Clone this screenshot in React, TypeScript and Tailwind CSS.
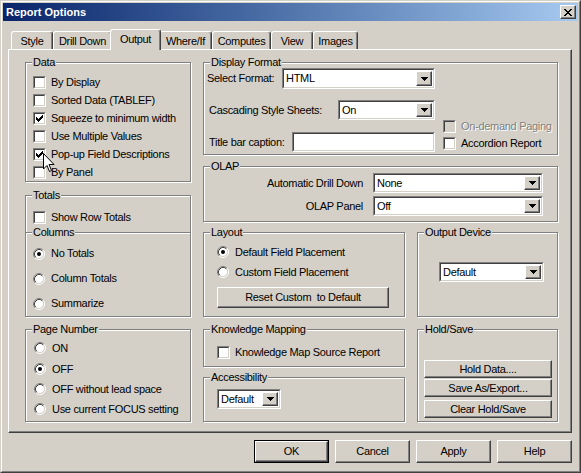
import clsx from "clsx";
import type { ReactNode } from "react";

const CHECK = ["......x", ".....xx", "x...xxx", "xx.xxx.", "xxxxx..", ".xxx...", "..x...."];
const CLOSE_X = ["xx....xx", ".xx..xx.", "..xxxx..", "...xx...", "..xxxx..", ".xx..xx.", "xx....xx"];
const ARROW = ["xxxxxxx", ".xxxxx.", "..xxx..", "...x..."];

function Pixels({ rows, color = "#000" }: { rows: string[]; color?: string }) {
	const w = rows[0].length;
	const h = rows.length;
	return (
		<svg width={w} height={h} viewBox={`0 0 ${w} ${h}`} shapeRendering="crispEdges">
			{rows.flatMap((r, y) =>
				[...r].map((c, x) => (c === "x" ? <rect key={`${x}-${y}`} x={x} y={y} width="1" height="1" fill={color} /> : null)),
			)}
		</svg>
	);
}

function Check({ checked, disabled }: { checked?: boolean; disabled?: boolean }) {
	return (
		<span className="flex h-[13px] w-[13px] shrink-0 border border-t-[#808080] border-r-white border-b-white border-l-[#808080]">
			<span
				className={clsx(
					"flex flex-1 items-center justify-center border border-t-[#404040] border-r-[#d4d0c8] border-b-[#d4d0c8] border-l-[#404040]",
					disabled ? "bg-[#d4d0c8]" : "bg-white",
				)}
			>
				{checked && <Pixels rows={CHECK} />}
			</span>
		</span>
	);
}

function Radio({ on }: { on?: boolean }) {
	return (
		<svg width="12" height="12" viewBox="0 0 12 12" className="shrink-0">
			<circle cx="6" cy="6" r="4.5" fill="#fff" />
			<path d="M2.11 9.89A5.5 5.5 0 0 1 9.89 2.11" fill="none" stroke="#808080" />
			<path d="M9.89 2.11A5.5 5.5 0 0 1 2.11 9.89" fill="none" stroke="#fff" />
			<path d="M2.82 9.18A4.5 4.5 0 0 1 9.18 2.82" fill="none" stroke="#404040" />
			<path d="M9.18 2.82A4.5 4.5 0 0 1 2.82 9.18" fill="none" stroke="#d4d0c8" />
			{on && <circle cx="6" cy="6" r="2" fill="#000" />}
		</svg>
	);
}

function CheckRow({ label, checked, disabled, className }: { label: string; checked?: boolean; disabled?: boolean; className?: string }) {
	return (
		<div className={clsx("flex items-center gap-[5px] leading-[13px]", className)}>
			<Check checked={checked} disabled={disabled} />
			<span className={clsx("whitespace-nowrap", disabled && "text-[#808080] [text-shadow:1px_1px_0_#fff]")}>{label}</span>
		</div>
	);
}

function RadioRow({ label, on, className }: { label: string; on?: boolean; className?: string }) {
	return (
		<div className={clsx("flex items-center gap-[6px] leading-[13px]", className)}>
			<Radio on={on} />
			<span className="whitespace-nowrap">{label}</span>
		</div>
	);
}

function Group({ label, className, children }: { label: string; className?: string; children?: ReactNode }) {
	return (
		<div className={clsx("relative border border-[#808080] shadow-[inset_1px_1px_0_#fff,1px_1px_0_#fff]", className)}>
			<span className="absolute top-[-7px] left-[6px] bg-[#d4d0c8] px-px leading-[13px] whitespace-nowrap">{label}</span>
			{children}
		</div>
	);
}

function Sunken({ className, children }: { className?: string; children?: ReactNode }) {
	return (
		<div className={clsx("flex border border-t-[#808080] border-r-white border-b-white border-l-[#808080]", className)}>
			<div className="flex flex-1 border border-t-[#404040] border-r-[#d4d0c8] border-b-[#d4d0c8] border-l-[#404040] bg-white">
				{children}
			</div>
		</div>
	);
}

function Select({ value, className }: { value: string; className?: string }) {
	return (
		<Sunken className={className}>
			<span className="flex-1 self-center pl-[2px] leading-[13px] whitespace-nowrap">{value}</span>
			<span className="m-px flex w-[16px] items-center justify-center border border-t-white border-r-[#404040] border-b-[#404040] border-l-white bg-[#d4d0c8] shadow-[inset_-1px_-1px_0_#808080]">
				<Pixels rows={ARROW} />
			</span>
		</Sunken>
	);
}

function Button({ label, className }: { label: string; className?: string }) {
	return (
		<div
			className={clsx(
				"flex items-center justify-center border border-t-white border-r-[#404040] border-b-[#404040] border-l-white bg-[#d4d0c8] leading-[13px] shadow-[inset_-1px_-1px_0_#808080] whitespace-nowrap",
				className,
			)}
		>
			{label}
		</div>
	);
}

const tabs = [
	{ name: "Style", w: "w-[42px]" },
	{ name: "Drill Down", w: "w-[59px]" },
	{ name: "Output", w: "w-[51px]", active: true },
	{ name: "Where/If", w: "w-[53px]" },
	{ name: "Computes", w: "w-[59px]" },
	{ name: "View", w: "w-[42px]" },
	{ name: "Images", w: "w-[45px]" },
];

function Tabs() {
	return (
		<div className="mt-[8px] flex h-[20px] items-end pl-[3px]">
			{tabs.map((t) => (
				<div
					key={t.name}
					className={clsx(
						"flex justify-center rounded-t-[3px] border-t border-r border-l border-t-white border-r-[#404040] border-l-white bg-[#d4d0c8] leading-[13px] shadow-[inset_-1px_0_0_#808080] whitespace-nowrap",
						t.w,
						t.active ? "relative z-10 -mx-[2px] -mb-px h-[21px] items-start pt-[3px]" : "h-[18px] items-center pt-px",
					)}
				>
					{t.name}
				</div>
			))}
		</div>
	);
}

function Panel() {
	return (
		<div className="flex h-[384px] gap-[12px] border border-t-white border-r-[#404040] border-b-[#404040] border-l-white pt-[12px] pl-[16px] shadow-[inset_-1px_-1px_0_#808080]">
			<div className="flex w-[166px] flex-col">
				<Group label="Data" className="h-[120px] pt-[10px] pl-[7px]">
					<CheckRow label="By Display" className="h-[18px]" />
					<CheckRow label="Sorted Data (TABLEF)" className="h-[18px]" />
					<CheckRow label="Squeeze to minimum width" checked className="h-[18px]" />
					<CheckRow label="Use Multiple Values" className="h-[18px]" />
					<CheckRow label="Pop-up Field Descriptions" checked className="h-[18px]" />
					<CheckRow label="By Panel" className="h-[18px]" />
				</Group>
				<Group label="Totals" className="mt-[13px] h-[38px] pt-[12px] pl-[7px]">
					<CheckRow label="Show Row Totals" className="h-[18px]" />
				</Group>
				<Group label="Columns" className="-mt-px h-[85px] pt-[8px] pl-[7px]">
					<RadioRow label="No Totals" on className="h-[25px]" />
					<RadioRow label="Column Totals" className="h-[25px]" />
					<RadioRow label="Summarize" className="h-[25px]" />
				</Group>
				<Group label="Page Number" className="mt-[12px] h-[93px] pt-[8px] pl-[8px]">
					<RadioRow label="ON" className="h-[20px]" />
					<RadioRow label="OFF" on className="mt-px h-[20px]" />
					<RadioRow label="OFF without lead space" className="h-[20px]" />
					<RadioRow label="Use current FOCUS setting" className="h-[20px]" />
				</Group>
			</div>

			<div className="flex w-[355px] flex-col">
				<Group label="Display Format" className="flex h-[93px] pl-[3px]">
					<div className="flex w-[228px] flex-col pt-[5px]">
						<div className="flex h-[21px] items-center">
							<span className="w-[75px] leading-[13px]">Select Format:</span>
							<Select value="HTML" className="h-[21px] w-[153px]" />
						</div>
						<div className="mt-[11px] flex h-[20px] items-center">
							<span className="w-[131px] pl-[2px] leading-[13px]">Cascading Style Sheets:</span>
							<Select value="On" className="h-[20px] w-[97px]" />
						</div>
						<div className="mt-[12px] flex h-[20px] items-center">
							<span className="w-[85px] pl-[2px] leading-[13px]">Title bar caption:</span>
							<Sunken className="h-[20px] w-[143px]" />
						</div>
					</div>
					<div className="ml-[8px] flex flex-col gap-[4px] pt-[57px]">
						<CheckRow label="On-demand Paging" disabled className="h-[13px] gap-[4px]" />
						<CheckRow label="Accordion Report" className="h-[13px] gap-[4px]" />
					</div>
				</Group>

				<Group label="OLAP" className="mt-[11px] flex h-[56px] flex-col gap-[3px] pt-[6px]">
					<div className="flex h-[20px] items-center gap-[10px]">
						<span className="w-[159px] text-right leading-[13px]">Automatic Drill Down</span>
						<Select value="None" className="h-[20px] w-[170px]" />
					</div>
					<div className="flex h-[20px] items-center gap-[10px]">
						<span className="w-[159px] text-right leading-[13px]">OLAP Panel</span>
						<Select value="Off" className="h-[20px] w-[170px]" />
					</div>
				</Group>

				<div className="mt-[10px] flex h-[85px] gap-[12px]">
					<Group label="Layout" className="w-[202px] pt-[9px] pl-[13px]">
						<RadioRow label="Default Field Placement" on className="h-[20px] gap-[5px]" />
						<RadioRow label="Custom Field Placement" className="h-[20px] gap-[5px]" />
						<Button label="Reset Custom  to Default" className="mt-[5px] h-[21px] w-[172px] whitespace-pre" />
					</Group>
					<Group label="Output Device" className="flex-1 pt-[29px] pl-[21px]">
						<Select value="Default" className="h-[20px] w-[105px]" />
					</Group>
				</div>

				<div className="mt-[12px] flex gap-[12px]">
					<div className="flex w-[202px] flex-col">
						<Group label="Knowledge Mapping" className="h-[38px] pt-[16px] pl-[13px]">
							<CheckRow label="Knowledge Map Source Report" className="h-[13px]" />
						</Group>
						<Group label="Accessibility" className="mt-[10px] h-[45px] pt-[11px] pl-[13px]">
							<Select value="Default" className="h-[20px] w-[64px]" />
						</Group>
					</div>
					<Group label="Hold/Save" className="h-[93px] flex-1 pt-[30px] pl-[6px]">
						<Button label="Hold Data...." className="h-[18px] w-[128px]" />
						<Button label="Save As/Export..." className="mt-px h-[18px] w-[128px]" />
						<Button label="Clear Hold/Save" className="mt-[3px] h-[18px] w-[128px]" />
					</Group>
				</div>
			</div>
		</div>
	);
}

export default function App() {
	return (
		<div className="relative h-[473px] w-[581px] overflow-hidden border border-t-[#d4d0c8] border-r-[#404040] border-b-[#404040] border-l-[#d4d0c8] bg-[#d4d0c8] font-['Liberation_Sans',Arial,sans-serif] text-[11px] tracking-[-0.3px] text-black select-none">
			<div className="h-full border border-t-white border-r-[#808080] border-b-[#808080] border-l-white p-px">
				<div className="flex h-[18px] items-center justify-between bg-linear-to-r from-[#0a246a] to-[#a6caf0] pr-[2px] pl-[3px]">
					<span className="leading-[13px] font-bold tracking-normal text-white">Report Options</span>
					<span className="flex h-[14px] w-[16px] items-center justify-center border border-t-white border-r-[#404040] border-b-[#404040] border-l-white bg-[#d4d0c8] shadow-[inset_-1px_-1px_0_#808080]">
						<Pixels rows={CLOSE_X} />
					</span>
				</div>

				<div className="pr-[6px] pl-[5px]">
					<Tabs />
					<Panel />
					<div className="mt-[7px] flex justify-end gap-[6px]">
						<div className="flex h-[23px] w-[75px] border border-black">
							<Button label="OK" className="flex-1" />
						</div>
						<Button label="Cancel" className="h-[23px] w-[75px]" />
						<Button label="Apply" className="h-[23px] w-[75px]" />
						<Button label="Help" className="h-[23px] w-[75px]" />
					</div>
				</div>
			</div>

			<svg width="13" height="20" viewBox="0 0 13 20" className="absolute top-[152px] left-[42px]">
				<polygon points="0.5,0.5 0.5,16 4,12.5 6.5,18.5 8.5,17.5 6,11.5 11,11.5" fill="#fff" stroke="#000" />
			</svg>
		</div>
	);
}
